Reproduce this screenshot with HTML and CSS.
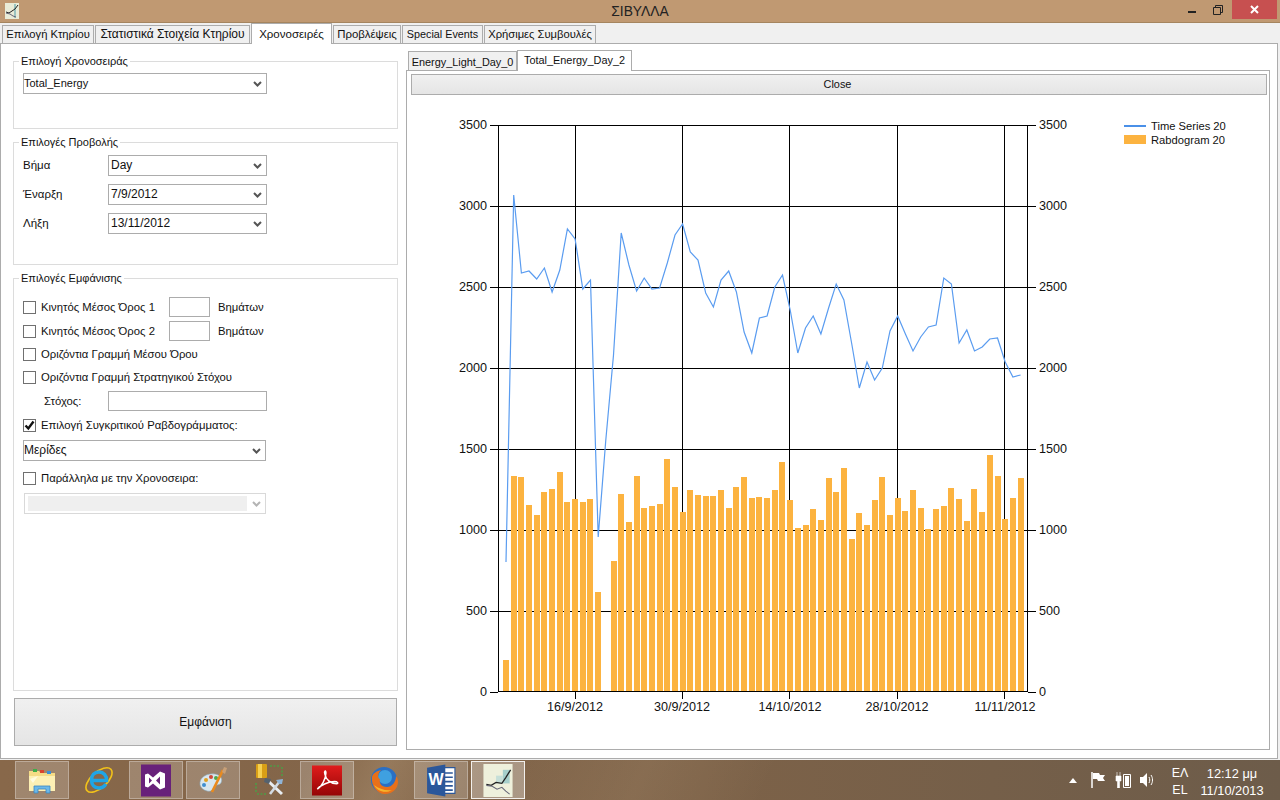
FILE: index.html
```html
<!DOCTYPE html>
<html lang="el">
<head>
    <meta charset="UTF-8">
    <title>ΣΙΒΥΛΛΑ</title>
    <link rel="stylesheet" href="styles.css">
</head>
<body>
    <svg class="defs" width="0" height="0">
        <symbol id="chev" viewBox="0 0 9 6">
            <path d="M1 1l3.5 3.5L8 1" fill="none" stroke="currentColor" stroke-width="2"/>
        </symbol>
    </svg>

    <header class="titlebar">
        <svg class="app-icon" viewBox="0 0 14 16">
            <rect width="14" height="16" fill="#e9ecd8"/>
            <path d="M9 1v14h2V1z" fill="#9cc4c0"/>
            <path d="M1 9l3 1 3-2 3-2 3-4" fill="none" stroke="#222"/>
            <path d="M1 10l4 1 3 2 3 1" fill="none" stroke="#667"/>
        </svg>
        <div class="app-title">ΣΙΒΥΛΛΑ</div>
        <div class="win-btns">
            <div class="win-min"><span></span></div>
            <div class="win-max">
                <svg width="10" height="10" viewBox="0 0 10 10"><path d="M.5 2.5h7v7h-7zM2.5 2.5v-2h7v7h-2" fill="none" stroke="#222"/></svg>
            </div>
            <div class="win-close">
                <svg width="9" height="9" viewBox="0 0 9 9"><path d="M1 1l7 7M8 1L1 8" stroke="#fff" stroke-width="2"/></svg>
            </div>
        </div>
    </header>

    <main class="window">
        <nav class="tabs">
            <div class="tab t-building">Επιλογή Κτηρίου</div>
            <div class="tab t-stats">Στατιστικά Στοιχεία Κτηρίου</div>
            <div class="tab t-series active">Χρονοσειρές</div>
            <div class="tab t-pred">Προβλέψεις</div>
            <div class="tab t-events">Special Events</div>
            <div class="tab t-tips">Χρήσιμες Συμβουλές</div>
        </nav>

        <div class="panel">
            <section class="left">
                <fieldset class="group g-series">
                    <legend>Επιλογή Χρονοσειράς</legend>
                    <div class="combo w-full"><span>Total_Energy</span><svg class="chev"><use href="#chev"/></svg></div>
                </fieldset>

                <fieldset class="group g-view">
                    <legend>Επιλογές Προβολής</legend>
                    <div class="view-row"><label>Βήμα</label><div class="combo w-small"><span>Day</span><svg class="chev"><use href="#chev"/></svg></div></div>
                    <div class="view-row"><label>Έναρξη</label><div class="combo w-small"><span>7/9/2012</span><svg class="chev"><use href="#chev"/></svg></div></div>
                    <div class="view-row"><label>Λήξη</label><div class="combo w-small"><span>13/11/2012</span><svg class="chev"><use href="#chev"/></svg></div></div>
                </fieldset>

                <fieldset class="group g-display">
                    <legend>Επιλογές Εμφάνισης</legend>
                    <div class="display-grid">
                        <div class="row"><i class="chk"></i><label class="avg-label">Κινητός Μέσος Όρος 1</label><div class="field f-steps"></div><label>Βημάτων</label></div>
                        <div class="row"><i class="chk"></i><label class="avg-label">Κινητός Μέσος Όρος 2</label><div class="field f-steps"></div><label>Βημάτων</label></div>
                        <div class="row"><i class="chk"></i><label>Οριζόντια Γραμμή Μέσου Όρου</label></div>
                        <div class="row"><i class="chk"></i><label>Οριζόντια Γραμμή Στρατηγικού Στόχου</label></div>
                        <div class="row goal-row"><label>Στόχος:</label><div class="field f-goal"></div></div>
                        <div class="row"><i class="chk"><svg viewBox="0 0 11 11"><path d="M1.500 5.500l2.800 3L9.500 1.500" fill="none" stroke="#111" stroke-width="2.400"/></svg></i><label>Επιλογή Συγκριτικού Ραβδογράμματος:</label></div>
                        <div class="combo w-wide"><span>Μερίδες</span><svg class="chev"><use href="#chev"/></svg></div>
                        <div class="row"><i class="chk"></i><label>Παράλληλα με την Χρονοσειρα:</label></div>
                        <div class="combo w-wide disabled"><span></span><svg class="chev"><use href="#chev"/></svg></div>
                    </div>
                </fieldset>

                <button class="btn show-btn">Εμφάνιση</button>
            </section>

            <section class="right">
                <nav class="subtabs">
                    <div class="subtab s-light">Energy_Light_Day_0</div>
                    <div class="subtab s-total active">Total_Energy_Day_2</div>
                </nav>
                <div class="subpanel">
                    <button class="btn close-btn">Close</button>
                    <svg class="chart" width="862" height="655" viewBox="407 95 862 655">
                        <g id="grid" stroke="#000" shape-rendering="crispEdges"></g>
                        <g id="bars" fill="#fcb340"></g>
                        <polyline id="series" fill="none" stroke="#5a9cf0" stroke-width="1.2"/>
                        <g id="axes" stroke="#000" shape-rendering="crispEdges"></g>
                        <g class="axis-text">
                            <text x="487" y="129" text-anchor="end">3500</text>
                            <text x="487" y="210" text-anchor="end">3000</text>
                            <text x="487" y="291" text-anchor="end">2500</text>
                            <text x="487" y="372" text-anchor="end">2000</text>
                            <text x="487" y="453" text-anchor="end">1500</text>
                            <text x="487" y="534" text-anchor="end">1000</text>
                            <text x="487" y="615" text-anchor="end">500</text>
                            <text x="487" y="696" text-anchor="end">0</text>
                            <text x="1039" y="129">3500</text>
                            <text x="1039" y="210">3000</text>
                            <text x="1039" y="291">2500</text>
                            <text x="1039" y="372">2000</text>
                            <text x="1039" y="453">1500</text>
                            <text x="1039" y="534">1000</text>
                            <text x="1039" y="615">500</text>
                            <text x="1039" y="696">0</text>
                            <text x="575" y="711" text-anchor="middle">16/9/2012</text>
                            <text x="682" y="711" text-anchor="middle">30/9/2012</text>
                            <text x="790" y="711" text-anchor="middle">14/10/2012</text>
                            <text x="897" y="711" text-anchor="middle">28/10/2012</text>
                            <text x="1005" y="711" text-anchor="middle">11/11/2012</text>
                        </g>
                        <g class="legend-text">
                            <rect x="1124" y="125" width="22" height="2" fill="#4a90e8"/>
                            <text x="1151" y="130">Time Series 20</text>
                            <rect x="1124" y="135" width="22" height="9" fill="#fcb340"/>
                            <text x="1151" y="144">Rabdogram 20</text>
                        </g>
                    </svg>
                </div>
            </section>
        </div>
    </main>

    <footer class="taskbar">
        <div class="task-btn on">
            <svg viewBox="0 0 30 30"><path d="M2 6h10l2 2h14v18H2z" fill="#f5dc86"/><path d="M2 11h26v15H2z" fill="#fdf0b4"/><path d="M6 4h4v3H6z" fill="#3fae49"/><path d="M13 5h4v3h-4z" fill="#d9432f"/><path d="M20 6h4v3h-4z" fill="#3a8fd8"/><path d="M7 28v-7h16v7h-4v-4h-8v4z" fill="#6cb8e8" stroke="#3a86c0" stroke-width=".8"/><path d="M3 14l8-3-5 7z" fill="#fffbe0"/></svg>
        </div>
        <div class="task-btn">
            <svg viewBox="0 0 30 30"><ellipse cx="15" cy="15" rx="16" ry="8" transform="rotate(-42 15 15)" fill="none" stroke="#f2c21a" stroke-width="1.6"/><path d="M7.500 15.500h15c.3-5-3-8.500-7.500-8.500-4.500 0-7.500 3.500-7.500 8s3 8 7.500 8c3 0 5.500-1.500 6.800-4" fill="none" stroke="#1fa5e6" stroke-width="3.600"/></svg>
        </div>
        <div class="task-btn on">
            <svg class="tall" viewBox="0 0 30 32"><rect width="30" height="32" fill="#68217a"/><path d="M4 10l3-1 5 4 7-6 5 2v14l-5 2-7-6-5 4-3-1zM8 13v6l3-3zM19 12l-4 4 4 4z" fill="#fff" fill-rule="evenodd"/></svg>
        </div>
        <div class="task-btn on">
            <svg viewBox="0 0 30 30"><path d="M2 20C1 12 9 8 17 9c6 1 8 5 6 9-2 3-6 1-7 4-1 3-3 5-7 4-4-1-6-3-7-6z" fill="#d8e6ee" stroke="#8aa4b4" stroke-width=".6"/><circle cx="8" cy="15" r="2" fill="#e0a020"/><circle cx="13" cy="12" r="2" fill="#d04a38"/><circle cx="18" cy="13" r="2" fill="#50a848"/><circle cx="6" cy="20" r="2" fill="#3f8fd0"/><path d="M14 27L25 5" stroke="#e98a1e" stroke-width="2.600"/><path d="M24 7l2-5 3 1-2 6z" fill="#c8a078"/></svg>
        </div>
        <div class="task-btn">
            <svg class="tall" viewBox="0 0 30 33"><rect x="1" y="0" width="11" height="14" rx="1" fill="#d99f16"/><rect x="3" y="0" width="4" height="14" fill="#f6d050"/><path d="M15 2h11M27 3v10M1 19v10M2 30h10" fill="none" stroke="#4f9b46" stroke-width="1.600" stroke-dasharray="2 1.500"/><path d="M12 16l15 14" stroke="#e8edf2" stroke-width="3"/><path d="M15 30l10-13" stroke="#d2dae2" stroke-width="2.600"/><path d="M21 16l7-1-1 5-3 0z" fill="#8fb4d8"/><path d="M10 14l6 1-2 5-5-2z" fill="#55626e"/></svg>
        </div>
        <div class="task-btn on">
            <svg class="tall" viewBox="0 0 28 28"><defs><linearGradient id="pdfbg" x1="0" y1="0" x2="0" y2="1"><stop offset="0" stop-color="#e01c1c"/><stop offset="1" stop-color="#950606"/></linearGradient></defs><rect width="28" height="28" fill="url(#pdfbg)"/><path d="M5 22c4-2 8-10 8-15 0-3-2-2-1 1 1 5 5 9 11 9 2 0 1-2-2-2-5 0-13 3-16 7z" fill="none" stroke="#fff" stroke-width="1.400"/></svg>
        </div>
        <div class="task-btn">
            <svg viewBox="0 0 30 30"><circle cx="15" cy="15" r="13" fill="#2a6fc4"/><circle cx="16" cy="12" r="7" fill="#3fa0e0"/><path d="M3 12c-1 9 5 17 13 17 8 0 13-6 13-12 0-3-1-5-2-6 0 6-4 11-9 11-6 0-8-4-7-8-3-1-2-6 1-9-4 1-8 3-9 7z" fill="#e8701a"/><path d="M5 20c3 6 11 9 18 5-6 1-13-1-18-5z" fill="#f6b52c"/></svg>
        </div>
        <div class="task-btn on">
            <svg class="tall" viewBox="0 0 28 30"><path d="M13 3h14v24H13z" fill="#fff" stroke="#2b579a"/><path d="M16 8h9M16 12h9M16 16h9M16 20h9M16 24h9" stroke="#2b579a" stroke-width="1.500"/><path d="M1 3l17-3v30L1 27z" fill="#2b579a"/><text x="9.500" y="19" text-anchor="middle" class="word-w">W</text></svg>
        </div>
        <div class="task-btn active">
            <svg class="tall" viewBox="0 0 30 34"><rect width="30" height="34" fill="#eef0dc"/><path d="M20 6h7v14h-7z" fill="#a6cfcb"/><path d="M13 12h7v8h-7z" fill="#c6dfd8"/><path d="M3 21l5 1 5-3 6 1 4-6 5-8" fill="none" stroke="#222" stroke-width="1.300"/><path d="M3 22l6 1 5 3 5-2 4 4 4 3" fill="none" stroke="#667" stroke-width="1.100"/></svg>
        </div>
        <div class="tray">
            <svg class="t-arrow" width="8" height="5" viewBox="0 0 8 5"><path d="M0 5l4-5 4 5z" fill="#fff"/></svg>
            <svg class="t-flag" width="16" height="16" viewBox="0 0 16 16"><path d="M2 0v16" stroke="#fff" stroke-width="1.500"/><path d="M3 1h6l1 2h5l-2 3 2 3H8L7 7H3z" fill="#fff"/></svg>
            <svg class="t-batt" width="16" height="16" viewBox="0 0 16 16"><path d="M2 0v4M5 0v4M1 4h5v5H4.500v7H2.500V9H1z" fill="#fff" stroke="#fff" stroke-width=".6"/><path d="M8.500 2.500h7v13h-7z" fill="none" stroke="#fff"/><path d="M10 4h4v10h-4z" fill="#fff"/></svg>
            <svg class="t-vol" width="16" height="16" viewBox="0 0 16 16"><path d="M1 5h3l4-4v14l-4-4H1z" fill="#fff"/><path d="M10 5c1 2 1 4 0 6M12 3c2 3 2 7 0 10" fill="none" stroke="#fff"/></svg>
            <div class="lang"><span>ΕΛ</span><span>EL</span></div>
            <div class="clock"><span>12:12 μμ</span><span>11/10/2013</span></div>
        </div>
    </footer>

    <script>
        // δεδομένα του γραφήματος: κορυφή κάθε μπάρας και σημεία της γραμμής, ανά ημέρα
        const barTops = [660,476,477,505,515,492,489,472,502,499,502,499,592,null,561,494,522,476,508,506,504,459,487,512,490,495,496,496,490,508,487,477,498,497,498,490,462,500,528,525,509,520,478,492,468,539,513,525,500,477,515,498,511,490,508,529,509,506,488,499,521,489,512,455,476,519,498,478];
        const lineYs = [562,195,273,271,279,268,292,270,229,239,289,280,537,440,355,233,265,291,278,289,288,263,235,224,252,260,293,307,280,271,292,332,353,318,316,287,275,310,353,328,316,334,308,284,300,343,388,362,380,368,331,316,334,351,337,327,325,278,284,343,330,351,347,339,338,362,377,375];
        const NS = 'http://www.w3.org/2000/svg';
        const dayX = n => 506 + 7.68 * n;

        function addLine(parent, x1, y1, x2, y2) {
            const l = document.createElementNS(NS, 'line');
            l.setAttribute('x1', x1);
            l.setAttribute('y1', y1);
            l.setAttribute('x2', x2);
            l.setAttribute('y2', y2);
            parent.appendChild(l);
        }

        const grid = document.getElementById('grid');
        const axes = document.getElementById('axes');
        [125, 206, 287, 368, 449, 530, 611].forEach(y => addLine(grid, 498, y + 0.5, 1028, y + 0.5));
        [575, 682, 789, 897, 1004].forEach(x => {
            addLine(grid, x + 0.5, 125, x + 0.5, 692);
            addLine(axes, x + 0.5, 692, x + 0.5, 699);
        });
        [125, 206, 287, 368, 449, 530, 611, 692].forEach(y => {
            addLine(axes, 490, y + 0.5, 498, y + 0.5);
            addLine(axes, 1028, y + 0.5, 1036, y + 0.5);
        });
        addLine(axes, 498.5, 125, 498.5, 692);
        addLine(axes, 1027.5, 125, 1027.5, 692);
        addLine(axes, 498, 691.5, 1028, 691.5);

        const bars = document.getElementById('bars');
        barTops.forEach((top, n) => {
            if (top === null) return;
            const r = document.createElementNS(NS, 'rect');
            r.setAttribute('x', Math.round(dayX(n) - 3));
            r.setAttribute('y', top);
            r.setAttribute('width', 6);
            r.setAttribute('height', 691 - top);
            bars.appendChild(r);
        });

        document.getElementById('series').setAttribute('points',
            lineYs.map((y, n) => dayX(n).toFixed(1) + ',' + y).join(' '));
    </script>
</body>
</html>
```

FILE: styles.css
```css
* {
    box-sizing: border-box;
}

body {
    margin: 0;
    width: 1280px;
    height: 800px;
    overflow: hidden;
    display: flex;
    flex-direction: column;
    background: #f0f0f0;
    color: #111;
    font: 12px 'Liberation Sans', 'Noto Sans', sans-serif;
}

.defs {
    position: absolute;
}

/* γραμμή τίτλου */
.titlebar {
    height: 23px;
    flex-shrink: 0;
    display: grid;
    grid-template-columns: 1fr auto 1fr;
    background: #c09972;
    border-bottom: 1px solid #a5855f;
}

.app-icon {
    width: 14px;
    height: 16px;
    margin: 3px 0 0 5px;
}

.app-title {
    font-size: 13.8px;
    line-height: 24px;
    color: #222;
}

.win-btns {
    display: flex;
    justify-content: flex-end;
    height: 19px;
    padding-right: 3px;
}

.win-min {
    width: 25px;
    padding-top: 11px;
}

.win-min span {
    display: block;
    width: 8px;
    height: 2px;
    background: #222;
}

.win-max {
    width: 19px;
    padding-top: 4px;
}

.win-close {
    width: 45px;
    background: #c75050;
    display: flex;
    justify-content: center;
    align-items: center;
}

/* κύριο παράθυρο */
.window {
    height: 737px;
    flex-shrink: 0;
    display: flex;
    flex-direction: column;
    padding-right: 2px;
}

.tabs {
    height: 20px;
    flex-shrink: 0;
    display: flex;
    align-items: flex-end;
    padding-left: 2px;
    position: relative;
    z-index: 2;
}

.tab,
.subtab {
    height: 18px;
    line-height: 17px;
    text-align: center;
    white-space: nowrap;
    border: 1px solid #acacac;
    border-bottom: none;
    background: #f0f0f0;
    margin-right: 1px;
}

.tab.active,
.subtab.active {
    height: 21px;
    line-height: 20px;
    background: #fff;
    margin: 0 1px -1px 0;
    position: relative;
    z-index: 2;
}

.t-building { width: 92px; font-size: 11.2px; }
.t-stats { width: 155px; }
.t-series { width: 81px; font-size: 11.5px; }
.t-pred { width: 68px; font-size: 11.4px; }
.t-events { width: 81px; font-size: 10.8px; }
.t-tips { width: 112px; font-size: 11.2px; }

.panel {
    height: 716px;
    display: flex;
    background: #fff;
    border: 1px solid #acacac;
}

/* αριστερή στήλη */
.left {
    width: 397px;
    flex-shrink: 0;
    padding: 10px 0 0 12px;
    display: flex;
    flex-direction: column;
    gap: 6px;
}

.group {
    width: 385px;
    margin: 0;
    padding: 5px 9px 0;
    border: 1px solid #dcdcdc;
}

.group legend {
    margin-left: -4px;
    padding: 0 2px;
    font-size: 11px;
    line-height: 14px;
}

.g-series { height: 75px; }
.g-view { height: 130px; padding-top: 6px; }
.g-display { height: 420px; padding-top: 10px; }

.combo {
    height: 21px;
    display: flex;
    align-items: center;
    justify-content: space-between;
    padding: 0 4px 0 2px;
    background: #fff;
    border: 1px solid #acacac;
    white-space: nowrap;
}

.combo span {
    margin-bottom: 2px;
}

.w-full {
    width: 244px;
    padding-left: 0;
    font-size: 11px;
}

.w-small { width: 159px; }
.w-wide { width: 243px; padding-left: 0; }

.chev {
    width: 9px;
    height: 6px;
    color: #555;
}

.combo.disabled {
    margin-left: 1px;
    width: 242px;
    padding-left: 2px;
    border-color: #d9d9d9;
}

.combo.disabled span {
    width: 219px;
    height: 15px;
    margin: 0 0 0 1px;
    background: #efefef;
}

.combo.disabled .chev {
    color: #b4b4b4;
}

.view-row {
    display: flex;
    align-items: center;
    height: 21px;
    margin-bottom: 8px;
}

.view-row label {
    width: 85px;
    font-size: 11.5px;
    padding-bottom: 1px;
}

.display-grid {
    display: grid;
    grid-template-rows: 24px 24px 22px 24px 24px 24px 27px 28px 23px;
    align-items: center;
}

.row {
    display: flex;
    align-items: center;
    white-space: nowrap;
    font-size: 11.3px;
}

.chk {
    width: 13px;
    height: 13px;
    margin-right: 5px;
    flex-shrink: 0;
    background: #fff;
    border: 1px solid #707070;
}

.chk svg {
    display: block;
    width: 11px;
    height: 11px;
}

.avg-label {
    width: 128px;
}

.field {
    height: 20px;
    background: #fff;
    border: 1px solid #acacac;
}

.f-steps {
    width: 41px;
    margin-right: 8px;
}

.f-goal {
    width: 159px;
}

.goal-row {
    padding-left: 21px;
}

.goal-row label {
    width: 64px;
}

.btn {
    display: block;
    font: inherit;
    color: #111;
    text-align: center;
    border: 1px solid #acacac;
    background: linear-gradient(#f0f0f0, #e5e5e5);
    padding: 0;
}

.show-btn {
    width: 383px;
    height: 48px;
    margin: 1px 0 0 1px;
}

/* δεξιά στήλη */
.right {
    flex: 1;
    min-width: 0;
    display: flex;
    flex-direction: column;
    padding: 6px 7px 8px 8px;
}

.subtabs {
    height: 20px;
    flex-shrink: 0;
    display: flex;
    align-items: flex-end;
    padding-left: 2px;
    position: relative;
    z-index: 2;
    font-size: 10.9px;
}

.subtab.s-light { width: 109px; height: 19px; margin-right: 0; line-height: 20px; }
.subtab.s-total { width: 115px; line-height: 18px; }

.subpanel {
    flex: 1;
    min-height: 0;
    background: #fff;
    border: 1px solid #acacac;
    overflow: hidden;
}

.close-btn {
    width: 856px;
    height: 21px;
    margin: 3px 0 0 4px;
    padding: 0 3px 2px 0;
    font-size: 10.9px;
}

.chart {
    display: block;
}

.axis-text text {
    font-size: 12.6px;
    fill: #111;
}

.legend-text text {
    font-size: 11.2px;
    fill: #111;
}

/* γραμμή εργασιών */
.taskbar {
    height: 40px;
    flex-shrink: 0;
    display: flex;
    gap: 3px;
    align-items: stretch;
    padding: 1px 0 1px 15px;
    color: #fff;
    background:
        linear-gradient(115deg, rgba(255, 230, 190, 0) 24%, rgba(255, 230, 190, 0.16) 30%, rgba(255, 230, 190, 0) 38%, rgba(255, 230, 190, 0.08) 50%, rgba(255, 230, 190, 0) 60%),
        linear-gradient(90deg, #88684a, #7d6248 55%, #6d5c4a);
}

.task-btn {
    width: 54px;
    flex-shrink: 0;
    display: flex;
    justify-content: center;
    align-items: center;
    border: 1px solid transparent;
}

.task-btn.on {
    background: rgba(255, 255, 255, 0.2);
    border-color: rgba(255, 255, 255, 0.3);
}

.task-btn.active {
    background: rgba(255, 255, 255, 0.32);
    border: 1px solid rgba(255, 255, 255, 0.85);
}

.task-btn svg {
    width: 30px;
    height: 30px;
}

.task-btn svg.tall {
    height: 33px;
}

.word-w {
    font: bold 15px 'Liberation Sans', sans-serif;
    fill: #fff;
}

.tray {
    flex: 1;
    min-width: 0;
    display: flex;
    align-items: center;
    padding-left: 541px;
}

.t-arrow { margin-right: 13px; }
.t-flag { margin-right: 9px; }
.t-batt { margin-right: 8px; }

.lang,
.clock {
    display: flex;
    flex-direction: column;
    align-items: center;
    line-height: 17px;
    flex-shrink: 0;
    padding-top: 3px;
}

.lang {
    width: 30px;
    margin-left: 10px;
    font-size: 12.5px;
}

.clock {
    width: 64px;
    margin-left: 5px;
    font-size: 12.8px;
}
```
